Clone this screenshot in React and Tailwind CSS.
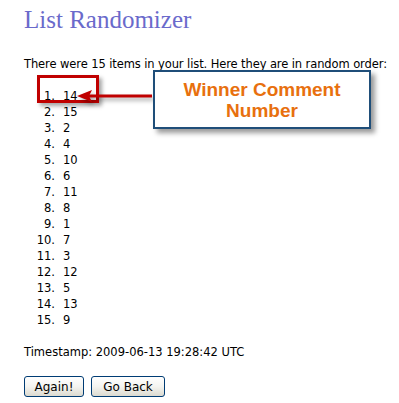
import React from "react";

const items = [14, 15, 2, 4, 10, 6, 11, 8, 1, 7, 3, 12, 5, 13, 9];

const XpButton = ({ label, width }) => (
  <button
    className={`h-[21px] ${width} rounded-[3px] border border-[#003c74] bg-gradient-to-b from-white via-[#f4f4f0] to-[#dcdad0] text-[12px] text-black leading-none`}
  >
    {label}
  </button>
);

const App = () => {
  return (
    <div className="relative w-[399px] h-[403px] overflow-hidden bg-white pl-[24px] font-['DejaVu_Sans',sans-serif] text-[11.5px] text-black">
      <h1 className="pt-[7px] font-['Liberation_Serif',serif] text-[25px] leading-[25px] text-[#6a6acb]">
        List Randomizer
      </h1>

      <p className="mt-[24px] leading-[16px] whitespace-nowrap tracking-[-0.1px]">
        There were 15 items in your list. Here they are in random order:
      </p>

      <ol className="mt-[16px]">
        {items.map((n, i) => (
          <li key={i} className="flex h-[16px] items-center leading-[16px]">
            <span className="w-[31px] text-right">{i + 1}.</span>
            <span className="ml-[8px]">{n}</span>
          </li>
        ))}
      </ol>

      <p className="mt-[16px] leading-[16px]">Timestamp: 2009-06-13 19:28:42 UTC</p>

      <div className="mt-[16px] flex gap-[7px]">
        <XpButton label="Again!" width="w-[60px]" />
        <XpButton label="Go Back" width="w-[74px]" />
      </div>

      {/* annotation: red highlight around the winner */}
      <div className="absolute left-[37px] top-[75px] w-[62px] h-[28px] border-[3px] border-[#c00000] shadow-[3px_3px_4px_rgba(0,0,0,0.35)]" />

      {/* annotation: arrow */}
      <svg
        className="absolute left-[74px] top-[86px] drop-shadow-[2px_3px_2px_rgba(0,0,0,0.35)]"
        width="82"
        height="20"
        viewBox="0 0 82 20"
      >
        <line x1="14" y1="10" x2="78" y2="10" stroke="#c00000" strokeWidth="3" />
        <polygon points="3,10 18,4 15,10 18,16" fill="#c00000" />
      </svg>

      {/* annotation: callout */}
      <div className="absolute left-[153px] top-[70px] w-[218px] h-[59px] border-2 border-[#1f4e79] bg-white shadow-[4px_4px_5px_rgba(0,0,0,0.4)] flex flex-col items-center justify-center font-['Liberation_Sans',Arial,sans-serif] font-bold text-[19px] leading-[21px] text-[#e8700e]">
        <span>Winner Comment</span>
        <span>Number</span>
      </div>
    </div>
  );
};

export default App;
